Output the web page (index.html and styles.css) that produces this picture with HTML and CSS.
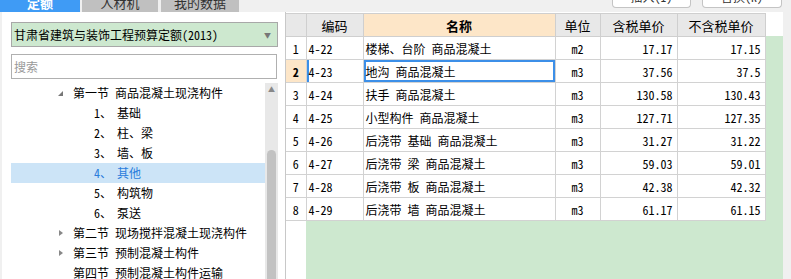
FILE: index.html
```html
<!DOCTYPE html>
<html lang="zh-CN">
<head>
    <meta charset="UTF-8">
    <title>定额</title>
    <link rel="stylesheet" href="styles.css">
</head>
<body>

    <div class="topbar">
        <div class="tabs">
            <div class="tab active">定额</div>
            <div class="tab">人材机</div>
            <div class="tab">我的数据</div>
        </div>
        <div class="tools">
            <div class="tool-btn"><span>插入(I)</span></div>
            <div class="tool-btn"><span>替换(R)</span></div>
        </div>
    </div>

    <div class="main">
        <!-- left: quota library tree -->
        <div class="side">
            <div class="lib-select">
                <span>甘肃省建筑与装饰工程预算定额(2013)</span>
                <span class="arrow">▼</span>
            </div>
            <div class="search">搜索</div>
            <div class="tree-wrap">
                <ul class="tree">
                    <li class="node"><span class="caret open"></span>第一节 商品混凝土现浇构件</li>
                    <li class="leaf"><span class="num">1、</span>基础</li>
                    <li class="leaf"><span class="num">2、</span>柱、梁</li>
                    <li class="leaf"><span class="num">3、</span>墙、板</li>
                    <li class="leaf selected"><span class="num">4、</span>其他</li>
                    <li class="leaf"><span class="num">5、</span>构筑物</li>
                    <li class="leaf"><span class="num">6、</span>泵送</li>
                    <li class="node"><span class="caret closed"></span>第二节 现场搅拌混凝土现浇构件</li>
                    <li class="node"><span class="caret closed"></span>第三节 预制混凝土构件</li>
                    <li class="node"><span class="caret"></span>第四节 预制混凝土构件运输</li>
                </ul>
                <div class="vscroll">
                    <span class="up">▲</span>
                    <div class="thumb"></div>
                </div>
            </div>
        </div>

        <!-- right: quota grid -->
        <div class="grid">
            <table class="quota-table">
                <colgroup>
                    <col style="width:20px">
                    <col style="width:57px">
                    <col style="width:192px">
                    <col style="width:45px">
                    <col style="width:77px">
                    <col style="width:88px">
                </colgroup>
                <thead>
                    <tr>
                        <th></th>
                        <th>编码</th>
                        <th class="sorted">名称</th>
                        <th>单位</th>
                        <th>含税单价</th>
                        <th>不含税单价</th>
                    </tr>
                </thead>
                <tbody>
                    <tr><td class="idx">1</td><td class="code">4-22</td><td>楼梯、台阶 商品混凝土</td><td class="unit">m2</td><td class="price">17.17</td><td class="price">17.15</td></tr>
                    <tr class="current"><td class="idx">2</td><td class="code">4-23</td><td class="focus">地沟 商品混凝土</td><td class="unit">m3</td><td class="price">37.56</td><td class="price">37.5</td></tr>
                    <tr><td class="idx">3</td><td class="code">4-24</td><td>扶手 商品混凝土</td><td class="unit">m3</td><td class="price">130.58</td><td class="price">130.43</td></tr>
                    <tr><td class="idx">4</td><td class="code">4-25</td><td>小型构件 商品混凝土</td><td class="unit">m3</td><td class="price">127.71</td><td class="price">127.35</td></tr>
                    <tr><td class="idx">5</td><td class="code">4-26</td><td>后浇带 基础 商品混凝土</td><td class="unit">m3</td><td class="price">31.27</td><td class="price">31.22</td></tr>
                    <tr><td class="idx">6</td><td class="code">4-27</td><td>后浇带 梁 商品混凝土</td><td class="unit">m3</td><td class="price">59.03</td><td class="price">59.01</td></tr>
                    <tr><td class="idx">7</td><td class="code">4-28</td><td>后浇带 板 商品混凝土</td><td class="unit">m3</td><td class="price">42.38</td><td class="price">42.32</td></tr>
                    <tr><td class="idx">8</td><td class="code">4-29</td><td>后浇带 墙 商品混凝土</td><td class="unit">m3</td><td class="price">61.17</td><td class="price">61.15</td></tr>
                </tbody>
            </table>
        </div>
    </div>

</body>
</html>
```

FILE: styles.css
```css
:root {
    --blue: #3f9bf5;
    --green: #cde8cf;
    --peach: #fde6c8;
    --line: #d2d2d2;
    --head: #e8e8e8;
}

* {
    margin: 0;
    padding: 0;
    box-sizing: border-box;
}

body {
    width: 791px;
    height: 279px;
    overflow: hidden;
    background: #f0f0f0;
    font-family: "Noto Sans Mono CJK SC", "Noto Sans CJK SC", "Liberation Mono", monospace;
    font-size: 12px;
    color: #000;
}

/* Top bar (scrolled half out of view) */
.topbar {
    height: 12px;
    display: flex;
    align-items: flex-start;
}

.tabs {
    display: flex;
    gap: 2px;
}

.tab {
    width: 76px;
    height: 12px;
    overflow: hidden;
    background: #c0c0c0;
    color: #333;
    font-size: 13px;
    line-height: 6px;
    text-align: center;
}

.tab.active {
    width: 80px;
    background: var(--blue);
    color: #fff;
    font-weight: bold;
}

.tab:last-child {
    width: 78px;
    margin-left: 1px;
}

.tools {
    margin-left: auto;
    margin-right: 9px;
    display: flex;
    gap: 11px;
}

.tool-btn {
    width: 80px;
    height: 8px;
    overflow: hidden;
    background: #fff;
    border: 1px solid #c4c4c4;
    border-top: 0;
    border-radius: 0 0 4px 4px;
    text-align: center;
    color: #333;
}

.tool-btn span {
    display: block;
    line-height: 12px;
    margin-top: -9px;
}

.tool-btn:first-child {
    width: 79px;
}

/* Layout */
.main {
    display: flex;
    height: 267px;
    padding-left: 2px;
}

/* Left panel */
.side {
    width: 283px;
    background: #fff;
    padding: 10px 7px 0 9px;
    display: flex;
    flex-direction: column;
}

.lib-select {
    height: 25px;
    border: 1px solid #a8a8a8;
    background: var(--green);
    display: flex;
    align-items: center;
    padding: 0 6px 0 2px;
    justify-content: space-between;
}

.lib-select .arrow {
    font-size: 7px;
    color: #777;
}

.search {
    margin-top: 7px;
    height: 25px;
    width: 266px;
    border: 1px solid #b0b0b0;
    color: #999;
    line-height: 23px;
    padding-left: 2px;
}

.tree-wrap {
    margin-top: 4px;
    flex: 1;
    display: flex;
    overflow: hidden;
}

.tree {
    list-style: none;
    flex: 1;
}

.tree li {
    height: 20px;
    line-height: 20px;
    white-space: nowrap;
    display: flex;
    align-items: center;
}

.tree .node {
    padding-left: 47px;
}

.caret {
    width: 15px;
    height: 20px;
    position: relative;
}

.caret.open::before {
    content: "";
    position: absolute;
    left: 0;
    top: 8px;
    border-left: 5px solid transparent;
    border-bottom: 5px solid #777;
}

.caret.closed::before {
    content: "";
    position: absolute;
    left: 1px;
    top: 7px;
    border-top: 3px solid transparent;
    border-bottom: 3px solid transparent;
    border-left: 4px solid #888;
}

.tree .leaf {
    padding-left: 83px;
}

.num {
    width: 23px;
}

.tree .selected {
    background: #cce4f7;
    color: #2a7ddc;
}

.vscroll {
    width: 13px;
    background: #e8e8e8;
    display: flex;
    flex-direction: column;
    align-items: center;
}

.vscroll .up {
    font-size: 7px;
    color: #888;
    line-height: 12px;
}

.vscroll .thumb {
    margin-top: 55px;
    width: 9px;
    flex: 1;
    background: #c2c2c2;
    border-radius: 5px 5px 0 0;
}

/* Right grid */
.grid {
    width: 498px;
    padding-top: 1px;
    border-left: 1px solid #c8c8c8;
    background:
        linear-gradient(#fff, #fff) 0 0 / 100% 24px no-repeat,
        linear-gradient(#fff, #fff) 0 0 / 20px 100% no-repeat,
        var(--green);
}

.quota-table {
    border-collapse: collapse;
    table-layout: fixed;
    width: 479px;
    background: #fff;
}

.quota-table th,
.quota-table td {
    height: 23px;
    border: 1px solid var(--line);
    padding: 0 2px;
    white-space: nowrap;
    overflow: hidden;
}

.quota-table th:first-child,
.quota-table td:first-child {
    border-left: 0;
}

.quota-table th {
    background: var(--head);
    font-weight: normal;
    font-size: 13px;
    border-color: #cfcfcf;
}

.quota-table th.sorted {
    background: var(--peach);
    font-weight: bold;
}

.idx {
    text-align: center;
}

.unit {
    text-align: center;
}

.price {
    text-align: right;
    padding-right: 4px !important;
}

.current .idx {
    background: var(--peach);
    font-weight: bold;
}

.current .code {
    box-shadow: inset 2px 0 0 #3c8fe8;
}

.current .focus {
    box-shadow: inset 0 0 0 2px #3c8fe8;
}
```
